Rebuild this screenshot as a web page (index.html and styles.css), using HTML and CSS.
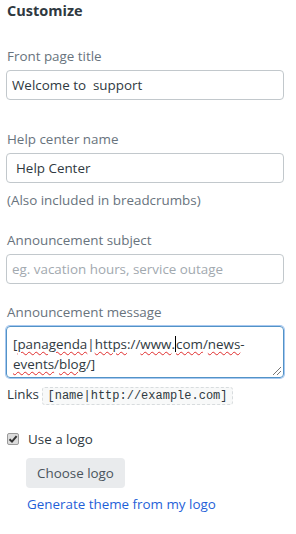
FILE: index.html
```html
<!DOCTYPE html>
<html lang="en">
<head>
    <meta charset="UTF-8">
    <meta name="viewport" content="width=device-width, initial-scale=1.0">
    <title>Customize</title>
    <link rel="stylesheet" href="styles.css">
</head>
<body>
    <div id="panel">
        <h1>Customize</h1>

        <div class="field first">
            <label class="label" for="title">Front page title</label>
            <input class="text-input" type="text" id="title" value="Welcome to  support">
        </div>

        <div class="field">
            <label class="label" for="hcname">Help center name</label>
            <input class="text-input" type="text" id="hcname" value="Help Center">
            <div class="hint">(Also included in breadcrumbs)</div>
        </div>

        <div class="field subject">
            <label class="label" for="subject">Announcement subject</label>
            <input class="text-input" type="text" id="subject" placeholder="eg. vacation hours, service outage">
        </div>

        <div class="field message">
            <label class="label">Announcement message</label>
            <div class="textarea">
                [<span class="typo">panagenda</span>|<span class="typo">https</span>://<span class="typo">www</span>.<span class="caret"></span><span class="typo">com</span>/<span class="typo">news</span>-<br><span class="typo">events</span>/<span class="typo">blog</span>/]
                <span class="grip"></span>
            </div>
            <div class="links">Links <code>[name|http://example.com]</code></div>
        </div>

        <label class="logo-row">
            <span class="checkbox">
                <svg width="10" height="10" viewBox="0 0 10 10"><path d="M1.5 5.2 L4 7.6 L8.6 2.2" fill="none" stroke="#333" stroke-width="2"/></svg>
            </span>
            Use a logo
        </label>
        <div class="logo-actions">
            <button class="btn">Choose logo</button>
            <a class="link" href="#">Generate theme from my logo</a>
        </div>
    </div>
</body>
</html>
```

FILE: styles.css
```css
body {
    margin: 0;
    padding: 0;
    background: #fff;
    font-family: 'Open Sans', 'Noto Sans', sans-serif;
    font-size: 13.4px;
    color: #2f3941;
}
#panel {
    padding: 0 12px 0 6px;
}
h1 {
    margin: 0;
    padding-left: 1px;
    font-size: 14.5px;
    font-weight: 700;
    line-height: 22px;
    color: #2f3941;
}
.field {
    margin-top: 29px;
}
.field.first {
    margin-top: 24px;
}
.field.subject {
    margin-top: 20px;
}
.field.message {
    margin-top: 18px;
}
.label {
    display: block;
    padding-left: 1px;
    line-height: 20px;
    margin-bottom: 4px;
    color: #68737d;
}
.text-input {
    display: block;
    box-sizing: border-box;
    width: 100%;
    height: 30px;
    margin: 0;
    padding: 0 5px;
    border: 1px solid #c2c8cc;
    border-radius: 4px;
    font-family: inherit;
    font-size: 13.4px;
    color: #2f3941;
    background: #fff;
}
#hcname {
    padding-left: 9px;
}
.text-input::placeholder {
    color: #a2a9af;
}
.hint {
    margin-top: 7px;
    padding-left: 1px;
    line-height: 20px;
    color: #68737d;
}
.textarea {
    position: relative;
    box-sizing: border-box;
    height: 52px;
    padding: 7px 6px 3px;
    border: 1px solid #5293c7;
    border-radius: 4px;
    box-shadow: 0 0 0 1px #a8c8f0;
    line-height: 20px;
    color: #2f3941;
}
.typo {
    text-decoration: underline wavy #e02c2c;
    text-decoration-thickness: 1px;
    text-underline-offset: 2px;
}
.caret {
    display: inline-block;
    width: 1px;
    height: 16px;
    margin-bottom: -3px;
    background: #000;
}
.grip {
    position: absolute;
    right: 2px;
    bottom: 2px;
    width: 8px;
    height: 8px;
    background: linear-gradient(135deg, transparent 45%, #777 45%, #777 52%, transparent 52%, transparent 70%, #777 70%, #777 77%, transparent 77%);
}
.links {
    margin-top: 6px;
    padding-left: 1px;
    line-height: 20px;
    color: #2f3941;
}
.links code {
    display: inline-block;
    padding: 0 4px;
    line-height: 16px;
    border: 1px dashed #d8dcde;
    border-radius: 3px;
    background: #f8f9f9;
    font-family: 'Liberation Mono', monospace;
    font-size: 12px;
}
.logo-row {
    display: flex;
    align-items: center;
    margin-top: 24px;
    line-height: 20px;
    color: #2f3941;
}
.checkbox {
    display: flex;
    align-items: center;
    justify-content: center;
    box-sizing: border-box;
    width: 12px;
    height: 12px;
    margin: 0 9px 0 1px;
    border: 1px solid #9a9a9a;
    border-radius: 2px;
    background: #dcdcdc;
}
.logo-actions {
    padding-left: 20px;
    margin-top: 9px;
}
.btn {
    display: block;
    height: 30px;
    padding: 0 11px;
    border: none;
    border-radius: 4px;
    background: #e9ebed;
    font-family: inherit;
    font-size: 13.4px;
    color: #49545c;
}
.link {
    display: block;
    margin-top: 6px;
    padding-left: 1px;
    line-height: 20px;
    color: #1f5fd8;
    text-decoration: none;
}
```
